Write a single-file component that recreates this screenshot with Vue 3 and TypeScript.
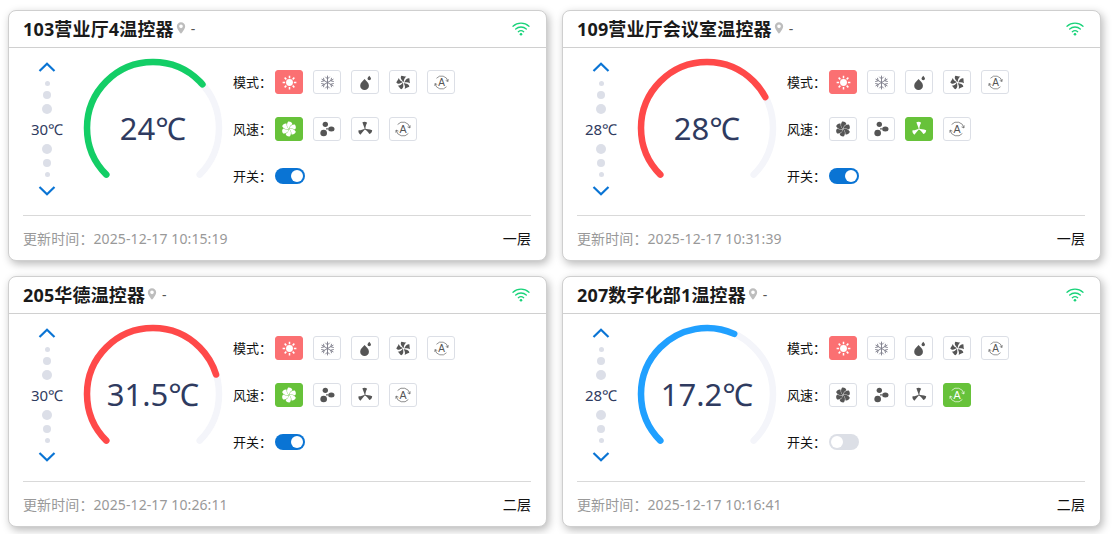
<script setup lang="ts">
type Card = {
  name: string
  temp: string
  setTemp: string
  percent: number
  color: string
  speed: number
  on: boolean
  time: string
  floor: string
}

const cards: Card[] = [
  { name: '103营业厅4温控器', temp: '24℃', setTemp: '30℃', percent: 0.68, color: '#13ce66', speed: 0, on: true, time: '2025-12-17 10:15:19', floor: '一层' },
  { name: '109营业厅会议室温控器', temp: '28℃', setTemp: '28℃', percent: 0.73, color: '#ff4949', speed: 2, on: true, time: '2025-12-17 10:31:39', floor: '一层' },
  { name: '205华德温控器', temp: '31.5℃', setTemp: '30℃', percent: 0.77, color: '#ff4949', speed: 0, on: true, time: '2025-12-17 10:26:11', floor: '二层' },
  { name: '207数字化部1温控器', temp: '17.2℃', setTemp: '28℃', percent: 0.59, color: '#20a0ff', speed: 3, on: false, time: '2025-12-17 10:16:41', floor: '二层' },
]

const rotated = (d: string, angles: number[]) =>
  angles.map((a) => `<path d="${d}" transform="rotate(${a} 12 12)" fill="currentColor"/>`).join('')

const icons: Record<string, string> = {
  sun: `<circle cx="12" cy="12" r="5.500" fill="currentColor"/><path d="M12 1v4M12 19v4M1 12h4M19 12h4M4.200 4.200 7 7M17 17l2.800 2.800M4.200 19.800 7 17M17 7l2.800-2.800" stroke="currentColor" stroke-width="2.400"/>`,
  snow: `<path d="M12 1v22M2.500 6.500l19 11M2.500 17.500l19-11M8.500 2.800l3.500 3.500 3.500-3.500M8.500 21.200l3.500-3.500 3.500 3.500M2 10.500l4.700-1.200-1.200-4.800M22 13.500l-4.700 1.200 1.200 4.800M2 13.500l4.700 1.200-1.200 4.800M22 10.500l-4.700-1.200 1.200-4.800" fill="none" stroke="#7f7f8c" stroke-width="1.500"/>`,
  drop: `<path d="M10.500 6.500c3.500 4 7 6.500 7 10.500a7 7 0 0 1-14 0c0-4 3.500-6.500 7-10.500z" fill="currentColor"/><path d="M18 1c1.200 1.700 2.800 3 2.800 4.700a2.800 2.800 0 0 1-5.600 0C15.200 4 16.800 2.700 18 1z" fill="currentColor"/>`,
  swirl: rotated('M12.500 11C9.500 8.500 6 5 8.500 1c3.500.5 5 1.500 8 1.500-2.500 2-4 4.500-4 8.500z', [0, 72, 144, 216, 288]),
  auto: `<path d="M3.960 5.250A10.500 10.500 0 0 1 22.300 10.200M20 18.750A10.500 10.500 0 0 1 1.660 13.800" fill="none" stroke="currentColor" stroke-width="1"/><path d="M22.800 6.500 22.300 10.400 18.800 8.800M1.200 17.500l.5-3.900 3.500 1.600" fill="none" stroke="currentColor" stroke-width="1"/><text x="12" y="18" text-anchor="middle" font-size="16" font-family="'Liberation Sans', sans-serif" fill="currentColor">A</text>`,
  fanHigh: rotated('M12 11.500C9 9.500 8 5 10.500 1c3.500-.5 6.500 1.500 6.500 4-2.500 1-4.500 3.500-5 6.500z', [0, 60, 120, 180, 240, 300]),
  fanLow: `<circle cx="9.500" cy="5" r="4" fill="currentColor"/><ellipse cx="18.500" cy="12" rx="4.800" ry="3.800" fill="currentColor"/><circle cx="7" cy="18" r="5" fill="currentColor"/><circle cx="12" cy="11.800" r="1.300" fill="currentColor"/>`,
  fanMid: rotated('M12 12.500C11 9 10 6 9 1.500c2.500-1 5.500-.5 7 1.500-2 2.500-3 5.500-3.500 9.500z', [-5, 115, 235]),
}

const modeIcons = ['sun', 'snow', 'drop', 'swirl', 'auto']
const speedIcons = ['fanHigh', 'fanLow', 'fanMid', 'auto']
</script>

<template>
  <div class="page">
    <div v-for="card in cards" :key="card.name" class="card">
      <div class="head">
        <span class="title">{{ card.name }}</span>
        <svg class="pin" viewBox="0 0 12 14">
          <path d="M6 0a5 5 0 0 0-5 5c0 3.500 5 9 5 9s5-5.500 5-9a5 5 0 0 0-5-5zm0 7.200A2.200 2.200 0 1 1 6 2.800a2.200 2.200 0 0 1 0 4.400z" fill="#bdbdbd" />
        </svg>
        <span class="dash">-</span>
        <svg class="wifi" viewBox="0 0 18 15">
          <path d="M1 5.200C5.500 1 12.500 1 17 5.200M3.700 8C6.700 5.300 11.300 5.300 14.300 8M6.300 10.700c1.600-1.300 3.800-1.300 5.400 0" fill="none" stroke="#19d37a" stroke-width="1.300" stroke-linecap="round" />
          <circle cx="9" cy="13.300" r="1.300" fill="#19d37a" />
        </svg>
      </div>

      <div class="body">
        <div class="stepper">
          <svg class="chev first" viewBox="0 0 18 10"><path d="M1.500 9 9 1.800 16.500 9" fill="none" stroke="#0a74d4" stroke-width="2.200" /></svg>
          <i class="dot s" />
          <i class="dot m" />
          <i class="dot l" />
          <span class="set">{{ card.setTemp }}</span>
          <i class="dot l" />
          <i class="dot m" />
          <i class="dot s" />
          <svg class="chev last" viewBox="0 0 18 10"><path d="M1.500 1 9 8.200 16.500 1" fill="none" stroke="#0a74d4" stroke-width="2.200" /></svg>
        </div>

        <div class="gauge">
          <svg viewBox="0 0 140 140">
            <path d="M23.330 116.670A66 66 0 1 1 116.670 116.670" pathLength="100" fill="none" stroke="#f4f5fa" stroke-width="6.500" stroke-linecap="round" />
            <path
              d="M23.330 116.670A66 66 0 1 1 116.670 116.670"
              pathLength="100"
              fill="none"
              :stroke="card.color"
              stroke-width="6.500"
              stroke-linecap="round"
              :stroke-dasharray="`${card.percent * 100} 200`"
            />
          </svg>
          <span class="temp">{{ card.temp }}</span>
        </div>

        <div class="controls">
          <div class="row">
            <span class="label">模式：</span>
            <span v-for="(ic, i) in modeIcons" :key="ic" class="btn" :class="{ heat: i === 0 }">
              <svg viewBox="0 0 24 24" v-html="icons[ic]" />
            </span>
          </div>
          <div class="row">
            <span class="label">风速：</span>
            <span v-for="(ic, i) in speedIcons" :key="ic" class="btn wide" :class="{ fan: i === card.speed }">
              <svg viewBox="0 0 24 24" v-html="icons[ic]" />
            </span>
          </div>
          <div class="row">
            <span class="label">开关：</span>
            <span class="toggle" :class="{ on: card.on }"><i /></span>
          </div>
        </div>
      </div>

      <div class="foot">
        <span class="time">更新时间：{{ card.time }}</span>
        <span class="floor">{{ card.floor }}</span>
      </div>
    </div>
  </div>
</template>

<style scoped>
.page {
  display: grid;
  grid-template-columns: 539px 539px;
  gap: 15px;
  padding: 10px 8px 7px;
  font-family: "Noto Sans", "Noto Sans CJK SC", sans-serif;
}

.card {
  height: 251px;
  box-sizing: border-box;
  background: #fff;
  border: 1px solid #cfcfcf;
  border-radius: 8px;
  box-shadow: 2px 3px 8px rgba(0, 0, 0, 0.28);
  display: flex;
  flex-direction: column;
}

.head {
  height: 37px;
  flex: none;
  box-sizing: border-box;
  border-bottom: 1px solid #d0d0d0;
  display: flex;
  align-items: center;
  padding: 0 16px 2px 14px;
}

.title {
  font-size: 18px;
  font-weight: 700;
  letter-spacing: 0.15px;
  color: #1a1a1a;
}

.pin {
  width: 10px;
  height: 12px;
  margin-left: 2px;
}

.dash {
  margin-left: 5px;
  font-size: 14px;
  color: #555;
}

.wifi {
  margin-left: auto;
  width: 18px;
  height: 15px;
}

.body {
  flex: 1;
  display: flex;
  padding: 10px 0 0 14px;
}

.stepper {
  width: 48px;
  flex: none;
  display: flex;
  flex-direction: column;
  align-items: center;
  gap: 5px;
  padding-top: 4px;
}

.chev {
  width: 18px;
  height: 10px;
  flex: none;
}

.chev.first {
  margin-bottom: 4px;
}

.chev.last {
  margin-top: 4px;
}

.dot {
  flex: none;
  border-radius: 50%;
  background: #dcdfe8;
}

.dot.s {
  width: 5px;
  height: 5px;
}

.dot.m {
  width: 8px;
  height: 8px;
}

.dot.l {
  width: 10px;
  height: 10px;
}

.set {
  height: 20px;
  line-height: 20px;
  font-size: 15px;
  color: #2f3b60;
}

.gauge {
  position: relative;
  width: 140px;
  height: 140px;
  flex: none;
  margin-left: 12px;
}

.gauge svg {
  display: block;
  width: 140px;
  height: 140px;
}

.temp {
  position: absolute;
  inset: 0;
  display: flex;
  align-items: center;
  justify-content: center;
  font-size: 31px;
  color: #2f3b60;
}

.controls {
  display: flex;
  flex-direction: column;
  gap: 23px;
  margin-left: 10px;
  padding-top: 12px;
}

.row {
  height: 24px;
  display: flex;
  align-items: center;
  gap: 10px;
}

.label {
  width: 32px;
  margin-top: -2px;
  font-size: 13px;
  color: #111;
  white-space: nowrap;
}

.btn {
  width: 28px;
  height: 24px;
  box-sizing: border-box;
  border: 1px solid #dcdfe6;
  border-radius: 3px;
  color: #555;
  display: flex;
  align-items: center;
  justify-content: center;
}

.btn svg {
  width: 15px;
  height: 15px;
}

.btn.wide svg {
  width: 16px;
  height: 16px;
}

.btn.heat {
  background: #fb7072;
  border-color: #fb7072;
  color: #fff;
}

.btn.fan {
  background: #67c23a;
  border-color: #67c23a;
  color: #fff;
}

.toggle {
  width: 30px;
  height: 16px;
  border-radius: 8px;
  background: #dcdfe6;
  display: flex;
  align-items: center;
  padding: 0 2px;
  box-sizing: border-box;
}

.toggle i {
  width: 12px;
  height: 12px;
  border-radius: 50%;
  background: #fff;
}

.toggle.on {
  background: #0a74d4;
  justify-content: flex-end;
}

.foot {
  height: 44px;
  flex: none;
  margin: 0 15px 0 14px;
  border-top: 1px solid #d9d9d9;
  display: flex;
  align-items: center;
  justify-content: space-between;
  font-size: 14px;
  letter-spacing: 0.1px;
}

.time {
  color: #999;
}

.floor {
  color: #111;
}
</style>
